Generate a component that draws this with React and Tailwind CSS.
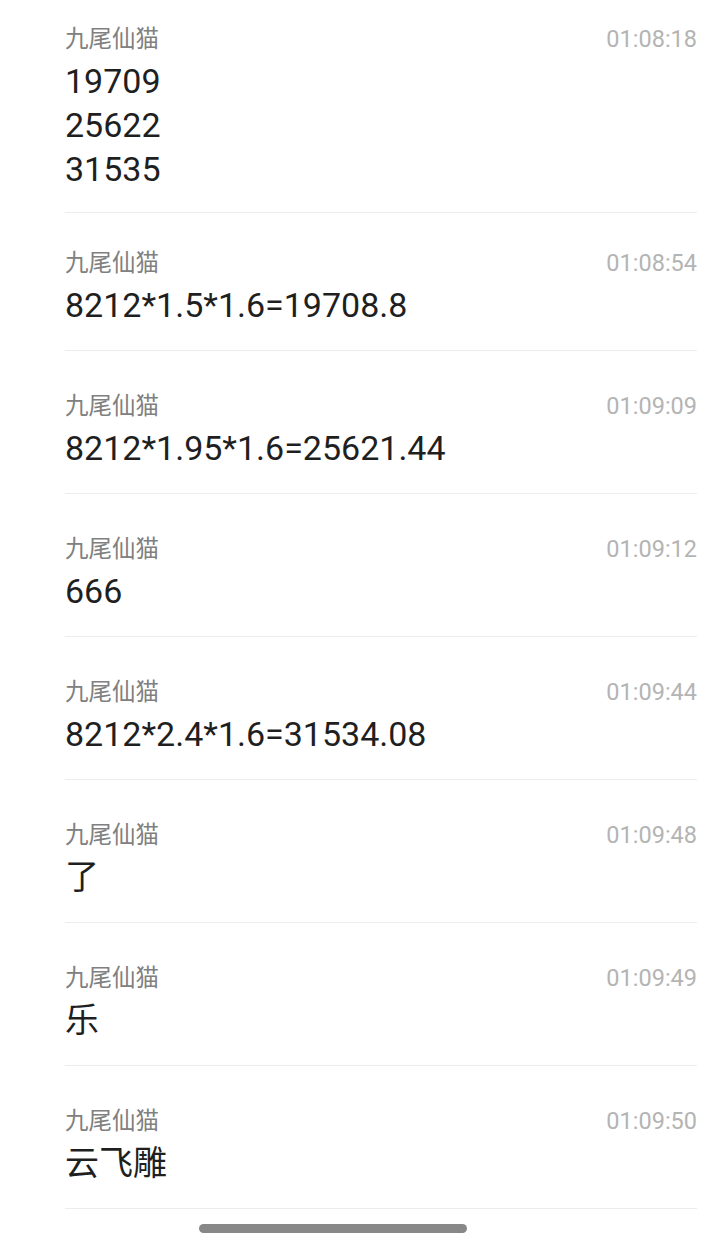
const messages = [
  { time: '01:08:18', lines: ['19709', '25622', '31535'] },
  { time: '01:08:54', lines: ['8212*1.5*1.6=19708.8'] },
  { time: '01:09:09', lines: ['8212*1.95*1.6=25621.44'] },
  { time: '01:09:12', lines: ['666'] },
  { time: '01:09:44', lines: ['8212*2.4*1.6=31534.08'] },
  { time: '01:09:48', lines: ['了'] },
  { time: '01:09:49', lines: ['乐'] },
  { time: '01:09:50', lines: ['云飞雕'] },
];

const padding = ['pt-[23px] pb-[21px]', 'pt-[34px] pb-[23px]'];

export default function App() {
  return (
    <div
      className="relative h-[1234px] w-[720px] overflow-hidden bg-white"
      style={{ fontFamily: 'Roboto, "Noto Sans CJK SC", sans-serif' }}
    >
      <div className="pl-[65px] pr-[23px]">
        {messages.map((m, i) => (
          <div
            key={m.time}
            className={`flex flex-col gap-[4px] border-b border-[#ececec] ${padding[i] || 'pt-[39px] pb-[23px]'}`}
          >
            <div className="flex h-[32px] items-center justify-between text-[23.5px] leading-[32px]">
              <span className="text-[#808080]">九尾仙猫</span>
              <span className="text-[#b4b4b4]">{m.time}</span>
            </div>
            <div className="text-[34px] leading-[44px] text-[#1f1f1f]">
              {m.lines.map((l) => (
                <div key={l}>{l}</div>
              ))}
            </div>
          </div>
        ))}
      </div>

      {/* home indicator */}
      <div className="absolute left-[199px] top-[1224px] h-[9px] w-[268px] rounded-full bg-[#888888]" />
    </div>
  );
}
